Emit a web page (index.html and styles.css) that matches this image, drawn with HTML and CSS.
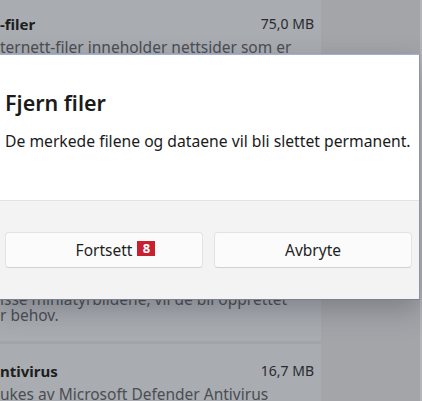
FILE: index.html
```html
<!DOCTYPE html>
<html lang="no">
<head>
  <meta charset="UTF-8">
  <meta name="viewport" content="width=device-width, initial-scale=1.0">
  <title>Fjern filer</title>
  <link rel="stylesheet" href="styles.css">
</head>
<body>

<div id="backdrop">
  <div id="file-list">
    <div class="file-card tall">
      <div class="file-head">
        <span class="file-name">-filer</span>
        <span class="file-size">75,0 MB</span>
      </div>
      <div class="file-desc">
        <span class="line">ternett-filer inneholder nettsider som er</span>
      </div>
      <div class="file-desc tail">
        <span class="line">isse miniatyrbildene, vil de bli opprettet</span>
        <span class="line">r behov.</span>
      </div>
    </div>
    <div class="file-card">
      <div class="file-head">
        <span class="file-name">ntivirus</span>
        <span class="file-size">16,7 MB</span>
      </div>
      <div class="file-desc">
        <span class="line">ukes av Microsoft Defender Antivirus</span>
      </div>
    </div>
  </div>
  <div id="side-area"></div>
</div>

<div id="dialog">
  <div id="dialog-body">
    <h2>Fjern filer</h2>
    <p>De merkede filene og dataene vil bli slettet permanent.</p>
  </div>
  <div id="dialog-footer">
    <button class="dialog-button">
      <span class="button-label">Fortsett<span class="step-badge">8</span></span>
    </button>
    <button class="dialog-button">
      <span class="button-label">Avbryte</span>
    </button>
  </div>
</div>

</body>
</html>
```

FILE: styles.css
```css
html, body {
  margin: 0;
  padding: 0;
  height: 100%;
  overflow: hidden;
}

body {
  font-family: 'Noto Sans', 'Open Sans', Arial, sans-serif;
  background-color: #a3a5a9;
  position: relative;
}

#backdrop {
  display: flex;
  height: 401px;
  border-right: 2px solid #b3b5b8;
  box-sizing: border-box;
}

#file-list {
  width: 321px;
  display: flex;
  flex-direction: column;
  gap: 3px;
  background-color: #a1a4a8;
}

#side-area {
  flex: 1;
  background-color: #a3a5a9;
}

.file-card {
  background-color: #a9acb1;
  padding: 17px 7px 20px 0;
  flex-shrink: 0;
}

.file-card.tall {
  height: 341px;
  box-sizing: border-box;
  display: flex;
  flex-direction: column;
  padding-top: 14px;
  padding-bottom: 18px;
}

.file-head {
  display: flex;
  justify-content: space-between;
  height: 20px;
  line-height: 20px;
  white-space: nowrap;
}

.file-name {
  font-size: 15px;
  font-weight: 700;
  color: #1d1e20;
}

.file-size {
  font-size: 14px;
  color: #2a2b2e;
}

.file-desc {
  margin-top: 5px;
  font-size: 15.5px;
  line-height: 16px;
  color: #4b4e53;
}

.file-desc.tail {
  margin-top: auto;
}

.line {
  display: block;
  white-space: nowrap;
}

/* dialog over the list */
#dialog {
  position: absolute;
  left: -4px;
  top: 54px;
  width: 424px;
  box-sizing: border-box;
  border: 1px solid #8a95aa;
  border-top-color: #9fb2d6;
  border-bottom-color: #7a8090;
  box-shadow: 0 10px 26px rgba(40, 44, 52, 0.3);
  background-color: #fff;
}

#dialog-body {
  padding: 33px 8px 0 8px;
  height: 145px;
  box-sizing: border-box;
}

#dialog-body h2 {
  margin: 0;
  font-size: 21.5px;
  font-weight: 600;
  line-height: 30px;
  color: #1b1b1b;
}

#dialog-body p {
  margin: 13px 0 0 0;
  font-size: 15.7px;
  line-height: 20px;
  color: #1b1b1b;
  white-space: nowrap;
}

#dialog-footer {
  background-color: #f3f3f3;
  border-top: 1px solid #e3e3e3;
  padding: 31px 7px 31px 8px;
  display: flex;
  gap: 11px;
}

.dialog-button {
  flex: 1;
  height: 36px;
  background-color: #fbfbfb;
  border: 1px solid #e3e3e3;
  border-bottom-color: #d0d0d0;
  border-radius: 4px;
  font-family: 'Noto Sans', 'Open Sans', Arial, sans-serif;
  font-size: 15.5px;
  color: #1f1f1f;
  padding: 0;
}

.button-label {
  position: relative;
}

.step-badge {
  position: absolute;
  left: 100%;
  top: 2px;
  margin-left: 5px;
  width: 18px;
  height: 15px;
  line-height: 15px;
  background-color: #c8202f;
  color: #fff;
  font-size: 13px;
  font-weight: 700;
  text-align: center;
}
```
